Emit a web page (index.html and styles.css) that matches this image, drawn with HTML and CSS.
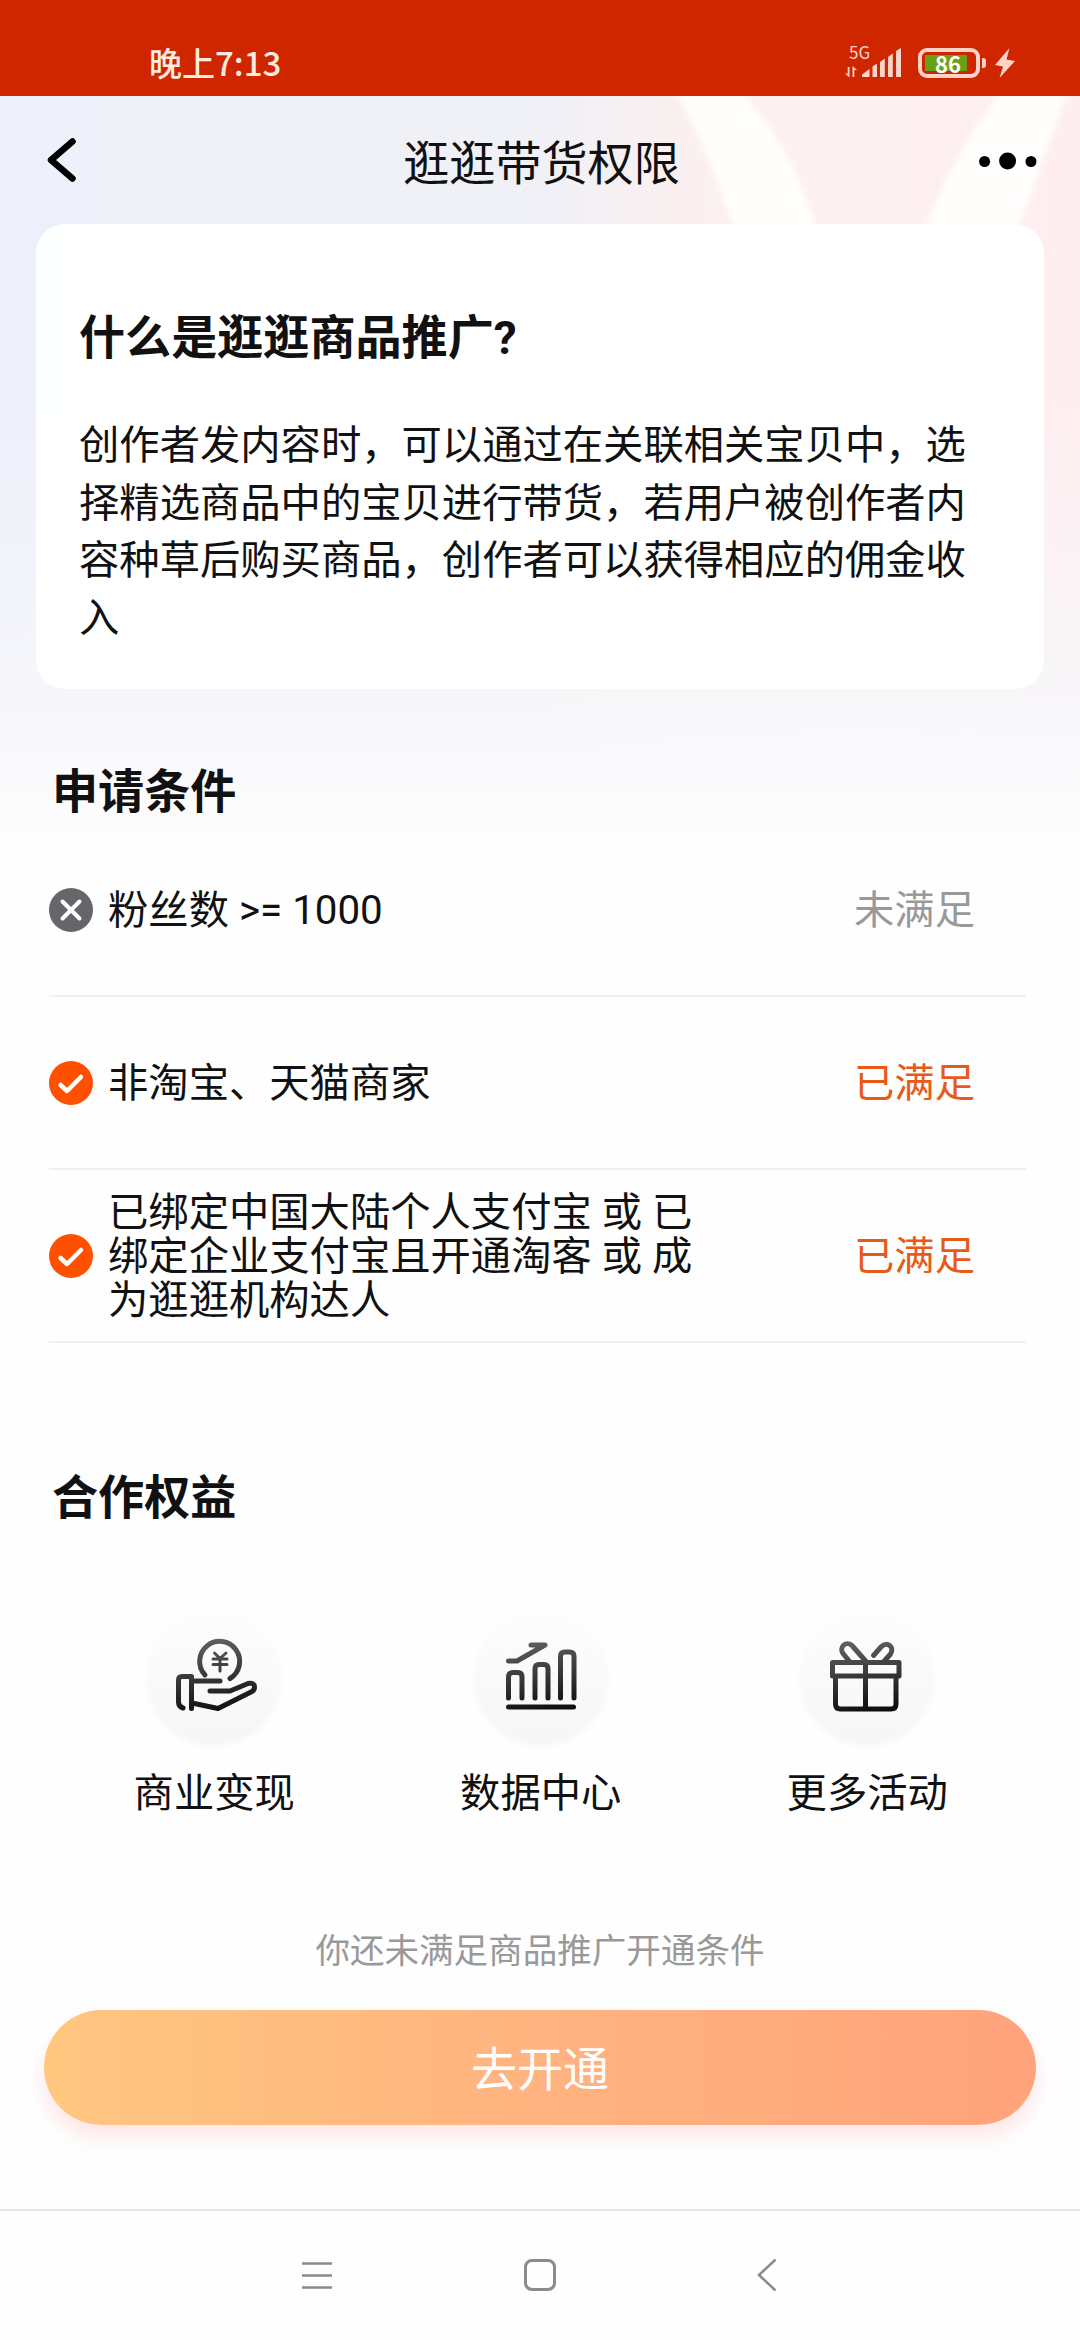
FILE: index.html
```html
<!DOCTYPE html>
<html lang="zh-CN">
<head>
<meta charset="utf-8">
<meta name="viewport" content="width=1080">
<title>逛逛带货权限</title>
<link rel="stylesheet" href="styles.css">
</head>
<body>
<header class="status-bar">
  <span class="clock">晚上7:13</span>
  <div class="status-icons">
    <div class="signal">
      <span class="network">5G</span>
      <svg width="57" height="30" viewBox="0 0 57 30">
        <g fill="#ffd3c8">
          <path d="M0 25.500L4.500 29.500V19H2.700V25.500Z"/>
          <path d="M12 22L7.500 18V29H9.300V22Z"/>
          <path d="M17 29V26.500L24.500 21V29Z"/>
          <path d="M27.500 29V18.500L32 15.500V29Z"/>
          <path d="M35 29V14L39.800 10.500V29Z"/>
          <path d="M43 29V9L47.800 5.500V29Z"/>
          <path d="M51 29V3L56 0V29Z"/>
        </g>
      </svg>
    </div>
    <div class="battery"><span class="battery-level">86</span></div>
    <svg class="bolt" width="20" height="30" viewBox="0 0 20 30"><path d="M14.500 0L0 17L8 18.500L4.500 30L20 13L11.500 11.500Z" fill="#ffd3c8"/></svg>
  </div>
</header>

<main class="page">
  <svg class="ribbons" width="1080" height="600" viewBox="0 0 1080 600">
    <path d="M672 -10C700 35 718 85 735 135C775 260 830 360 880 420L940 350C880 290 845 210 815 128C800 80 775 30 735 -10Z"/>
    <path d="M1006 -10C970 35 945 80 924 135C905 200 880 280 850 350L900 420C960 350 995 230 1020 128C1035 90 1048 45 1070 -10Z"/>
  </svg>

  <nav class="title-bar">
    <svg width="32" height="46" viewBox="0 0 32 46"><path d="M26.500 4.500L5 23L26.500 41.500" fill="none" stroke="#000" stroke-width="6.500" stroke-linecap="round" stroke-linejoin="round"/></svg>
    <h1 class="title">逛逛带货权限</h1>
    <svg width="58" height="20" viewBox="0 0 58 20"><circle cx="5.600" cy="11.500" r="5.500"/><circle cx="28.600" cy="11" r="8.500"/><circle cx="52" cy="11.500" r="5.500"/></svg>
  </nav>

  <section class="intro">
    <h2 class="heading">什么是逛逛商品推广?</h2>
    <p class="intro-text">创作者发内容时，可以通过在关联相关宝贝中，选择精选商品中的宝贝进行带货，若用户被创作者内容种草后购买商品，创作者可以获得相应的佣金收入</p>
  </section>

  <section class="requirements">
    <h2 class="heading">申请条件</h2>
    <ul class="list">
      <li class="item">
        <svg class="mark" viewBox="0 0 44 44"><circle cx="22" cy="22" r="22" fill="#66666a"/><path d="M13.500 13.500L30.500 30.500M30.500 13.500L13.500 30.500" stroke="#fff" stroke-width="4" stroke-linecap="round"/></svg>
        <span class="item-text">粉丝数 &gt;= 1000</span>
        <span class="state">未满足</span>
      </li>
      <li class="item">
        <svg class="mark" viewBox="0 0 44 44"><circle cx="22" cy="22" r="22" fill="#ff5000"/><path d="M11.500 24L18 30L32 16" fill="none" stroke="#fff" stroke-width="4.500" stroke-linecap="round" stroke-linejoin="round"/></svg>
        <span class="item-text">非淘宝、天猫商家</span>
        <span class="state state-done">已满足</span>
      </li>
      <li class="item">
        <svg class="mark" viewBox="0 0 44 44"><circle cx="22" cy="22" r="22" fill="#ff5000"/><path d="M11.500 24L18 30L32 16" fill="none" stroke="#fff" stroke-width="4.500" stroke-linecap="round" stroke-linejoin="round"/></svg>
        <span class="item-text">已绑定中国大陆个人支付宝 或 已绑定企业支付宝且开通淘客 或 成为逛逛机构达人</span>
        <span class="state state-done">已满足</span>
      </li>
    </ul>
  </section>

  <section class="benefits">
    <h2 class="heading">合作权益</h2>
    <div class="benefit-grid">
      <div class="benefit">
        <div class="disc">
          <svg width="144" height="144" viewBox="0 0 144 144" fill="none" stroke="url(#ink)" stroke-width="5" stroke-linecap="round" stroke-linejoin="round">
            <defs><linearGradient id="ink" gradientUnits="userSpaceOnUse" x1="60" y1="30" x2="72" y2="108"><stop offset="0" stop-color="#666"/><stop offset="1" stop-color="#0c0c0c"/></linearGradient></defs>
            <path d="M63 69A20 20 0 1 1 88 72.500"/>
            <path d="M72.500 47L78 52.500L84 47M71 53H85M71 58.500H85M78 52.500V65" stroke-width="3"/>
            <path d="M41 102C37.500 101 36.500 99 36.500 96V74Q36.500 70.500 40 70.500H49.500V102.500"/>
            <path d="M49.500 75H78M68 85H88L106 77.500Q112 76 112.500 81Q112.500 84.500 109 86L76 102.500L50 97"/>
          </svg>
        </div>
        <span class="benefit-name">商业变现</span>
      </div>
      <div class="benefit">
        <div class="disc">
          <svg width="144" height="144" viewBox="0 0 144 144" fill="none" stroke="url(#ink)" stroke-width="5" stroke-linecap="round" stroke-linejoin="round">
            <path d="M39.500 55H48L76 39H62"/>
            <path d="M39.500 92V71Q39.500 66.500 44 66.500H49Q53 66.500 53 71V92"/>
            <path d="M66 92V63Q66 58.500 70 58.500H75Q79 58.500 79 63V92"/>
            <path d="M91.500 92V50Q91.500 46 96 46H100.500Q105 46 105 50V92"/>
            <path d="M39.500 101H104.500"/>
          </svg>
        </div>
        <span class="benefit-name">数据中心</span>
      </div>
      <div class="benefit">
        <div class="disc">
          <svg width="144" height="144" viewBox="0 0 144 144" fill="none" stroke="url(#ink)" stroke-width="5" stroke-linecap="butt" stroke-linejoin="round">
            <path d="M37.500 56.500H104V70H37.500ZM40.500 70V98Q40.500 103 45.500 103H96Q101 103 101 98V70M70.500 56V103"/>
            <path d="M55 56L48 47.500C44 42 50 34 57 39.500L71 55.500M78.500 49.500L86 41C92 34.500 100 41 95.500 48L88.500 56" stroke-linecap="round"/>
          </svg>
        </div>
        <span class="benefit-name">更多活动</span>
      </div>
    </div>
  </section>

  <footer class="action">
    <p class="hint">你还未满足商品推广开通条件</p>
    <button class="apply" type="button">去开通</button>
  </footer>
</main>

<nav class="system-nav">
  <svg width="34" height="34" viewBox="0 0 34 34"><path d="M3 4.500H33M3 16.500H33M3 28.500H33" stroke="#8b8b8b" stroke-width="2.500"/></svg>
  <svg width="34" height="34" viewBox="0 0 34 34"><rect x="2.500" y="1.500" width="29" height="29" rx="6.500" fill="none" stroke="#8b8b8b" stroke-width="3"/></svg>
  <svg width="34" height="34" viewBox="0 0 34 34"><path d="M28.500 0.500L12 16L28.500 31.500" fill="none" stroke="#8b8b8b" stroke-width="2.500"/></svg>
</nav>
</body>
</html>
```
FILE: styles.css
```css
* {
  box-sizing: border-box;
}

body {
  display: flex;
  flex-direction: column;
  width: 1080px;
  height: 2340px;
  margin: 0;
  background: #fefefe;
  color: #111;
  font-family: Roboto, "Noto Sans CJK SC", sans-serif;
  font-size: 40.32px;
}

h1, h2, p, ul {
  margin: 0;
  padding: 0;
}

svg {
  display: block;
  flex: none;
}

/* Phone status bar */
.status-bar {
  display: flex;
  justify-content: space-between;
  height: 96px;
  padding: 0 65px 0 149px;
  background: #cf2600;
  color: #ffeadf;
}

.clock {
  padding-top: 38px;
  font-family: "Noto Sans CJK SC", sans-serif;
  font-size: 33px;
  font-weight: 500;
  line-height: 48px;
}

.status-icons {
  display: flex;
  align-items: flex-start;
  padding-top: 48px;
}

.signal {
  position: relative;
  margin-right: 16px;
}

.network {
  position: absolute;
  left: 4px;
  top: -5px;
  color: #ffd3c8;
  font-family: "Noto Sans CJK SC", sans-serif;
  font-size: 17px;
  line-height: 18px;
}

.battery {
  position: relative;
  width: 62px;
  height: 30px;
  margin-right: 15px;
  padding: 3px;
  border: 4px solid #ffd3c8;
  border-radius: 9px;
}

.battery::after {
  content: "";
  position: absolute;
  right: -10px;
  top: 6px;
  width: 4px;
  height: 10px;
  border-radius: 0 3px 3px 0;
  background: #ffd3c8;
}

.battery-level {
  display: block;
  width: 42px;
  height: 16px;
  padding-left: 4px;
  background: #67a216;
  color: #fff;
  font-family: "Noto Sans CJK SC", sans-serif;
  font-size: 22px;
  font-weight: 700;
  line-height: 17px;
  text-align: center;
}

/* Page */
.page {
  position: relative;
  display: flex;
  flex: 1;
  flex-direction: column;
  overflow: hidden;
  background:
    linear-gradient(180deg, rgba(248, 248, 250, 0) 0, rgba(248, 248, 250, 0) 300px, rgba(247, 247, 250, .85) 590px, #fafafc 680px, #fefefe 760px),
    linear-gradient(90deg, #edf0fc 0, #eff0f6 200px, #f0f0f7 540px, #faf0f1 660px, #fdf1f2 800px, #ffeef0 1080px);
}

.ribbons {
  position: absolute;
  left: 0;
  top: 0;
  overflow: visible;
  fill: #fffefc;
  filter: blur(3px);
}

.title-bar {
  position: relative;
  display: flex;
  align-items: center;
  justify-content: space-between;
  height: 128px;
  padding: 0 43px 0 46px;
}

.title {
  padding: 8px 0 0 26px;
  font-size: 46.08px;
  font-weight: 400;
  line-height: 60px;
}

.heading {
  font-size: 46.08px;
  font-weight: 700;
  line-height: 60px;
}

.intro {
  position: relative;
  height: 465px;
  margin: 0 36px;
  padding: 84px 76px 0 43px;
  border-radius: 29px;
  background: rgba(255, 255, 255, .95);
}

.intro-text {
  margin-top: 49px;
  line-height: 57.6px;
}

/* Requirements */
.requirements {
  padding: 73px 54px 0 49px;
}

.requirements .heading,
.benefits .heading {
  padding-left: 3px;
}

.list {
  margin-top: 2px;
  list-style: none;
}

.item {
  display: flex;
  align-items: center;
  height: 173px;
  border-bottom: 2px solid #f0f0f0;
}

.mark {
  width: 44px;
  height: 44px;
}

.item-text {
  width: 600px;
  margin-left: 15px;
  padding-top: 2px;
  line-height: 44px;
}

.state {
  margin-left: auto;
  margin-right: 51px;
  padding-top: 2px;
  color: #999;
  line-height: 44px;
}

.state-done {
  color: #e85a17;
}

/* Benefits */
.benefits {
  padding: 125px 48px 0 49px;
}

.benefit-grid {
  display: grid;
  grid-template-columns: repeat(3, 326.500px);
  margin: 78px 0 0 2px;
}

.benefit {
  display: flex;
  flex-direction: column;
  align-items: center;
}

.disc {
  width: 144px;
  height: 144px;
  border-radius: 50%;
  background:
    radial-gradient(circle, rgba(254, 254, 254, 0) 64px, #fefefe 72px),
    linear-gradient(180deg, #fdfdfd, #f6f6f6);
}

.benefit-name {
  margin-top: 14px;
  line-height: 60px;
}

/* Bottom action */
.action {
  margin-top: 102px;
  padding: 0 44px;
  text-align: center;
}

.hint {
  color: #999;
  font-size: 34.56px;
  line-height: 50px;
}

.apply {
  display: block;
  width: 100%;
  height: 115px;
  margin-top: 34px;
  padding: 5px 0 0;
  border: 0;
  border-radius: 58px;
  background: linear-gradient(90deg, #ffc780 0, #ffb37f 50%, #ffa37c 100%);
  box-shadow: 0 12px 20px rgba(255, 60, 60, .12);
  color: #fff;
  font-family: inherit;
  font-size: 46.08px;
  line-height: 110px;
}

/* Android navigation */
.system-nav {
  display: flex;
  justify-content: space-between;
  height: 131px;
  padding: 48px 299px 0;
  border-top: 2px solid #e3e3e3;
  background: #fefefe;
}
```
